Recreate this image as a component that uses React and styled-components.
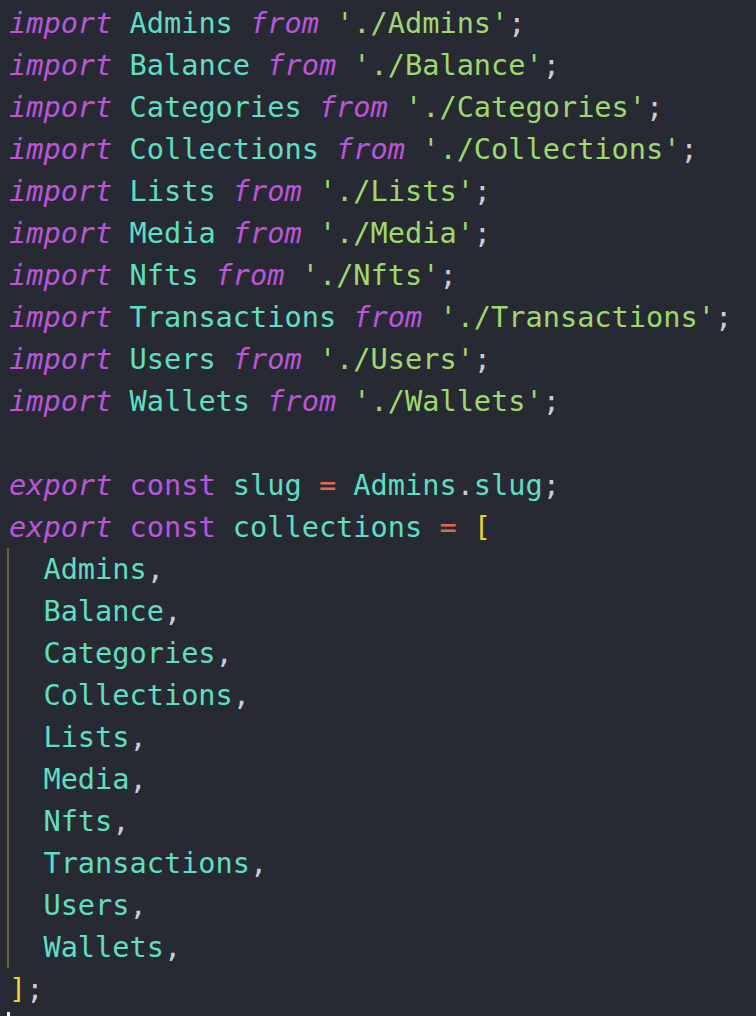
import React from 'react'
import styled, { createGlobalStyle } from 'styled-components'

const GlobalStyle = createGlobalStyle`
    html, body {
        margin: 0;
        padding: 0;
        background: #272a33;
    }
`;

const Editor = styled.div`
    width: 756px;
    height: 1016px;
    overflow: hidden;
    box-sizing: border-box;
    padding: 2px 0 0 9px;
    background: #272a33;
    font-family: "DejaVu Sans Mono", "Liberation Mono", monospace;
    font-size: 28.6px;
    line-height: 42px;
    color: #cfc9d8;
`;

const Line = styled.div`
    height: 42px;
    white-space: pre;
`;

const Guide = styled.div`
    margin-left: -2px;
    border-left: 2px solid #6b6340;
`;

const colors = {
    kw: '#bd55dc',
    id: '#5fdfc0',
    str: '#9fd86f',
    op: '#e2674e',
    br: '#f2cd3a',
    pn: '#cfc9d8',
};

const Tok = styled.span`
    color: ${({ kind }) => colors[kind]};
    font-style: ${({ italic }) => italic ? 'italic' : 'normal'};
`;

const Cursor = styled.div`
    width: 3px;
    height: 30px;
    margin: 2px 0 0 -2px;
    background: #ffffff;
`;

const modules = ['Admins', 'Balance', 'Categories', 'Collections', 'Lists', 'Media', 'Nfts', 'Transactions', 'Users', 'Wallets'];

const App = () => {
    return (
        <>
            <GlobalStyle />
            <Editor>
                {modules.map(name => (
                    <Line key={name}>
                        <Tok kind="kw" italic>import</Tok> <Tok kind="id">{name}</Tok> <Tok kind="kw" italic>from</Tok> <Tok kind="str">'./{name}'</Tok><Tok kind="pn">;</Tok>
                    </Line>
                ))}
                <Line> </Line>
                <Line>
                    <Tok kind="kw" italic>export</Tok> <Tok kind="kw">const</Tok> <Tok kind="id">slug</Tok> <Tok kind="op">=</Tok> <Tok kind="id">Admins</Tok><Tok kind="pn">.</Tok><Tok kind="id">slug</Tok><Tok kind="pn">;</Tok>
                </Line>
                <Line>
                    <Tok kind="kw" italic>export</Tok> <Tok kind="kw">const</Tok> <Tok kind="id">collections</Tok> <Tok kind="op">=</Tok> <Tok kind="br">[</Tok>
                </Line>
                <Guide>
                    {modules.map(name => (
                        <Line key={name}>
                            {'  '}<Tok kind="id">{name}</Tok><Tok kind="pn">,</Tok>
                        </Line>
                    ))}
                </Guide>
                <Line>
                    <Tok kind="br">]</Tok><Tok kind="pn">;</Tok>
                </Line>
                <Cursor />
            </Editor>
        </>
    )
}

export default App
